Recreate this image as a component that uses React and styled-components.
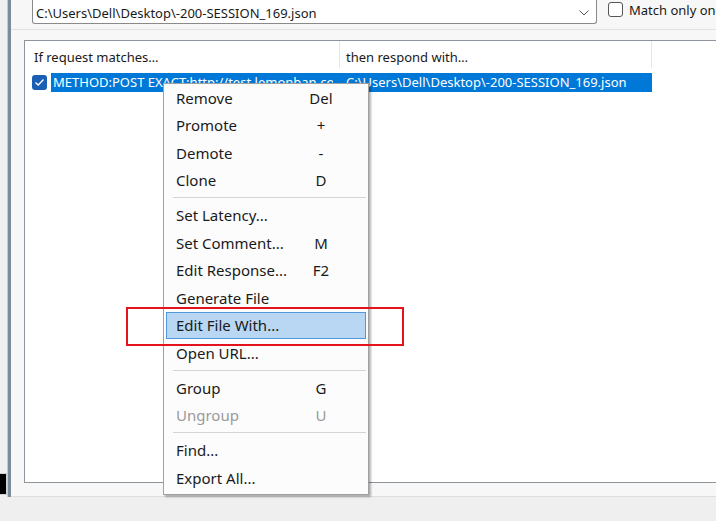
import React from 'react';
import styled, { createGlobalStyle } from 'styled-components';

const GlobalStyle = createGlobalStyle`
  html, body {
    margin: 0;
    padding: 0;
    width: 716px;
    height: 521px;
    overflow: hidden;
    background: #efefef;
    font-family: "Noto Sans", "Liberation Sans", sans-serif;
  }
`;

const Screen = styled.div`
  position: relative;
  width: 716px;
  height: 521px;
  display: flex;
  flex-direction: column;
  overflow: hidden;
`;

const Upper = styled.div`
  display: flex;
  height: 497px;
  flex: none;
`;

const LeftStrip = styled.div`
  width: 8px;
  background: #f0f0f0;
  border-right: 1px solid #c9c9c9;
  display: flex;
  flex-direction: column;
  justify-content: flex-end;
  padding-bottom: 2px;
  box-sizing: border-box;
`;

const BlackBox = styled.div`
  height: 22px;
  width: 7px;
  background: #000;
  border: 1px solid #d0d0d0;
  border-left: 0;
  box-sizing: border-box;
`;

const Splitter = styled.div`
  width: 3px;
  background: #7a8c9e;
`;

const Panel = styled.div`
  flex: 1;
  min-width: 0;
  background: #f7f7f7;
  display: flex;
  flex-direction: column;
  border-bottom: 1px solid #dedede;
  overflow: hidden;
`;

const TopRow = styled.div`
  display: flex;
  align-items: center;
  gap: 11px;
  padding: 0 0 0 21px;
  height: 30px;
  border-bottom: 1px solid #e2e2e2;
  box-sizing: border-box;
  white-space: nowrap;
`;

const Combo = styled.div`
  flex: none;
  width: 565px;
  height: 25px;
  margin-top: -6px;
  background: #fff;
  border: 1px solid #8a8a8a;
  border-radius: 0 0 3px 3px;
  border-top: 0;
  box-sizing: border-box;
  display: flex;
  align-items: center;
  justify-content: space-between;
  padding: 4px 7px 0 3px;
  font-size: 13px;
  color: #1a1a1a;
`;

const Chevron = styled.svg`
  width: 10px;
  height: 6px;
`;

const CheckLabel = styled.label`
  flex: none;
  display: flex;
  align-items: center;
  gap: 6px;
  margin-top: -10px;
  font-size: 13px;
  color: #1a1a1a;
`;

const EmptyBox = styled.span`
  width: 13px;
  height: 13px;
  border: 1px solid #555;
  border-radius: 3px;
  background: #fff;
  flex: none;
`;

const ListView = styled.div`
  margin: 10px 0 0 13px;
  height: 443px;
  background: #fff;
  border: 1px solid #8e949c;
  border-right: 0;
  box-sizing: border-box;
`;

const Header = styled.div`
  display: flex;
  height: 27px;
`;

const HeadCell = styled.div`
  width: ${p => p.$w}px;
  flex: none;
  box-sizing: border-box;
  border-right: 1px solid #e5e5e5;
  padding: 7px 0 0 ${p => p.$pad}px;
  font-size: 13px;
  color: #1a1a1a;
  white-space: nowrap;
`;

const Row = styled.div`
  display: flex;
  align-items: center;
  height: 19px;
  margin-top: 5px;
  padding-left: 7px;
`;

const RowCheck = styled.span`
  width: 15px;
  height: 15px;
  border-radius: 3px;
  background: #1a5fb4;
  display: flex;
  align-items: center;
  justify-content: center;
  flex: none;
  margin-right: 4px;
`;

const Selected = styled.div`
  display: flex;
  height: 19px;
  width: 601px;
  background: #0078d7;
  color: #fff;
  font-size: 13px;
  line-height: 19px;
`;

const SelCell = styled.div`
  flex: none;
  width: ${p => p.$w}px;
  margin-left: ${p => p.$pad}px;
  overflow: hidden;
  white-space: nowrap;
`;

const Menu = styled.div`
  position: absolute;
  left: 163px;
  top: 83px;
  width: 206px;
  background: #fcfcfc;
  border: 1px solid #a0a0a0;
  box-shadow: 2px 2px 2px rgba(0, 0, 0, 0.3);
  padding: 0 2px 2px;
  box-sizing: border-box;
  font-size: 15px;
`;

const Item = styled.div`
  display: flex;
  align-items: center;
  height: 27.5px;
  box-sizing: border-box;
  padding-left: 9px;
  color: ${p => (p.$disabled ? '#9a9a9a' : '#1a1a1a')};
  background: ${p => (p.$hot ? '#b9d7f3' : 'transparent')};
  border: 1px solid ${p => (p.$hot ? '#4f98dc' : 'transparent')};
`;

const Label = styled.span`
  width: 125px;
  white-space: nowrap;
`;

const Key = styled.span`
  width: 40px;
  text-align: center;
`;

const Sep = styled.div`
  height: 1px;
  background: #d4d4d4;
  margin: 3px 0 3.5px 7px;
`;

const Highlight = styled.div`
  position: absolute;
  left: 126px;
  top: 307px;
  width: 278px;
  height: 39px;
  border: 2px solid #e5131c;
  box-sizing: border-box;
`;

const menu = [
  ['Remove', 'Del'],
  ['Promote', '+'],
  ['Demote', '-'],
  ['Clone', 'D'],
  'sep',
  ['Set Latency...', ''],
  ['Set Comment...', 'M'],
  ['Edit Response...', 'F2'],
  ['Generate File', ''],
  ['Edit File With...', '', 'hot'],
  ['Open URL...', ''],
  'sep',
  ['Group', 'G'],
  ['Ungroup', 'U', 'disabled'],
  'sep',
  ['Find...', ''],
  ['Export All...', ''],
];

export default function App() {
  return (
    <Screen>
      <GlobalStyle />
      <Upper>
        <LeftStrip>
          <BlackBox />
        </LeftStrip>
        <Splitter />
        <Panel>
          <TopRow>
            <Combo>
              <span>C:\Users\Dell\Desktop\-200-SESSION_169.json</span>
              <Chevron viewBox="0 0 10 6">
                <path d="M0.5 0.5 L5 5 L9.5 0.5" fill="none" stroke="#555" strokeWidth="1" />
              </Chevron>
            </Combo>
            <CheckLabel>
              <EmptyBox />
              Match only once
            </CheckLabel>
          </TopRow>
          <ListView>
            <Header>
              <HeadCell $w={315} $pad={9}>If request matches…</HeadCell>
              <HeadCell $w={312} $pad={6}>then respond with…</HeadCell>
            </Header>
            <Row>
              <RowCheck>
                <svg width="11" height="9" viewBox="0 0 11 9">
                  <path d="M1.5 4.5 L4.2 7 L9.5 1.5" fill="none" stroke="#fff" strokeWidth="1.3" />
                </svg>
              </RowCheck>
              <Selected>
                <SelCell $w={280} $pad={2}>METHOD:POST EXACT:http://test.lemonban.com/futureloan/mvc/api/member/register</SelCell>
                <SelCell $w={300} $pad={13}>C:\Users\Dell\Desktop\-200-SESSION_169.json</SelCell>
              </Selected>
            </Row>
          </ListView>
        </Panel>
      </Upper>
      <Menu>
        {menu.map((m, i) =>
          m === 'sep' ? (
            <Sep key={i} />
          ) : (
            <Item key={i} $hot={m[2] === 'hot'} $disabled={m[2] === 'disabled'}>
              <Label>{m[0]}</Label>
              <Key>{m[1]}</Key>
            </Item>
          )
        )}
      </Menu>
      <Highlight />
    </Screen>
  );
}
